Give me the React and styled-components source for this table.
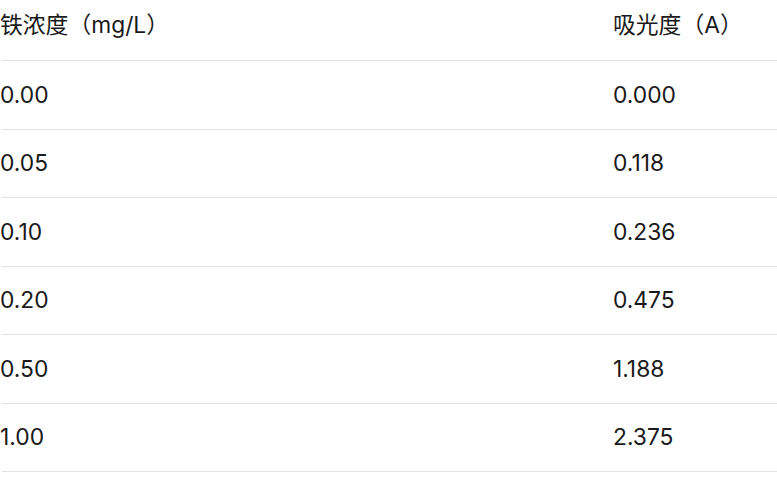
import React from 'react'
import styled, { createGlobalStyle } from 'styled-components'

const GlobalStyle = createGlobalStyle`
  html, body {
    margin: 0;
    padding: 0;
    background: #ffffff;
  }
  body {
    font-family: Inter, "Noto Sans CJK SC", sans-serif;
    color: #1a1a1a;
  }
`

const Table = styled.div`
  width: 777px;
  display: flex;
  flex-direction: column;
`

const Row = styled.div`
  display: grid;
  grid-template-columns: 611px 1fr;
  align-items: center;
  box-sizing: border-box;
  height: ${p => (p.head ? '61px' : '68.5px')};
  padding-bottom: ${p => (p.head ? '10px' : '0')};
  margin-left: 2px;
  border-bottom: 1px solid #e3e3e3;
`

const Cell = styled.div`
  font-size: 22.8px;
  line-height: 28px;
  margin-left: ${p => (p.first ? '-2px' : '0')};
  white-space: nowrap;
`

const rows = [
  ['0.00', '0.000'],
  ['0.05', '0.118'],
  ['0.10', '0.236'],
  ['0.20', '0.475'],
  ['0.50', '1.188'],
  ['1.00', '2.375'],
]

export default function App() {
  return (
    <>
      <GlobalStyle />
      <Table>
        <Row head>
          <Cell first>铁浓度（mg/L）</Cell>
          <Cell>吸光度（A）</Cell>
        </Row>
        {rows.map(r => (
          <Row key={r[0]}>
            <Cell first>{r[0]}</Cell>
            <Cell>{r[1]}</Cell>
          </Row>
        ))}
      </Table>
    </>
  )
}
